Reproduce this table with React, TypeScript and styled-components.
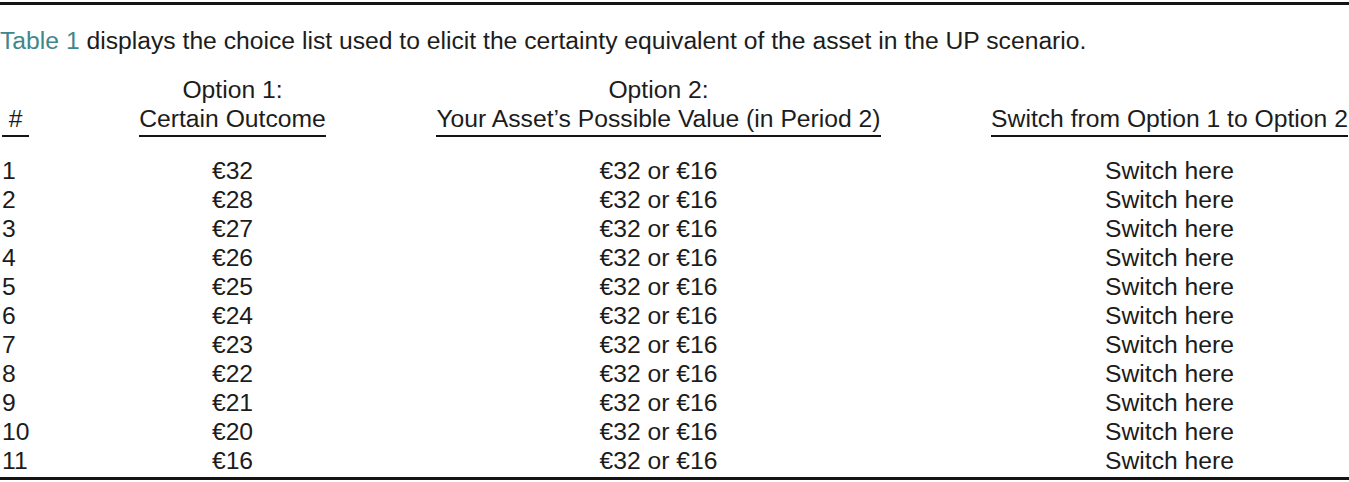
import React from "react";
import styled, { createGlobalStyle } from "styled-components";

const GlobalStyle = createGlobalStyle`
  html, body {
    margin: 0;
    padding: 0;
    background: #ffffff;
  }
  body {
    font-family: "Liberation Sans", Arial, Helvetica, sans-serif;
    color: #1c1c1c;
  }
`;

const Page = styled.div`
  width: 1349px;
  padding-top: 2px;
  font-size: 24.7px;
  line-height: 29px;
`;

const Rule = styled.div<{ $gap?: number }>`
  height: 3px;
  background: #141414;
  margin-top: ${(p) => p.$gap ?? 0}px;
`;

const Intro = styled.p`
  margin: 21px 0 0 0;
  white-space: nowrap;
`;

const TableRef = styled.span`
  color: #3f878b;
`;

const Table = styled.div`
  margin-top: 20px;
  padding-left: 2px;
`;

const Row = styled.div<{ $head?: boolean }>`
  display: grid;
  grid-template-columns: 27px 187px 445px 357px;
  column-gap: 110px;
  margin-bottom: ${(p) => (p.$head ? "19px" : "0")};
`;

const HeadCell = styled.div`
  display: flex;
  flex-direction: column;
  justify-content: flex-end;
  text-align: center;
  white-space: nowrap;
  padding-bottom: 2px;
  border-bottom: 2px solid #141414;
`;

const Cell = styled.div<{ $left?: boolean }>`
  text-align: ${(p) => (p.$left ? "left" : "center")};
  white-space: nowrap;
`;

const outcomes = [32, 28, 27, 26, 25, 24, 23, 22, 21, 20, 16];

export default function App() {
  return (
    <Page>
      <GlobalStyle />
      <Rule />
      <Intro>
        <TableRef>Table 1</TableRef> displays the choice list used to elicit the
        certainty equivalent of the asset in the UP scenario.
      </Intro>
      <Table>
        <Row $head>
          <HeadCell>
            <span>#</span>
          </HeadCell>
          <HeadCell>
            <span>Option 1:</span>
            <span>Certain Outcome</span>
          </HeadCell>
          <HeadCell>
            <span>Option 2:</span>
            <span>Your Asset’s Possible Value (in Period 2)</span>
          </HeadCell>
          <HeadCell>
            <span>Switch from Option 1 to Option 2</span>
          </HeadCell>
        </Row>
        {outcomes.map((v, i) => (
          <Row key={i}>
            <Cell $left>{i + 1}</Cell>
            <Cell>€{v}</Cell>
            <Cell>€32 or €16</Cell>
            <Cell>Switch here</Cell>
          </Row>
        ))}
      </Table>
      <Rule $gap={2} />
    </Page>
  );
}
